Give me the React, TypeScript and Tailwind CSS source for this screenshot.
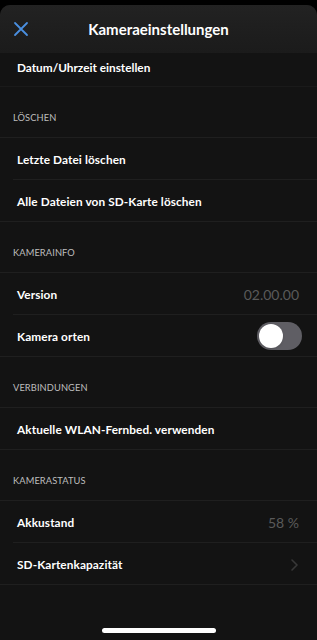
import React from "react";

type Row = {
  label: string;
  value?: string;
  toggle?: boolean;
  chevron?: boolean;
};

type Section = { title: string; rows: Row[] };

const sections: Section[] = [
  { title: "Löschen", rows: [{ label: "Letzte Datei löschen" }, { label: "Alle Dateien von SD-Karte löschen" }] },
  { title: "Kamerainfo", rows: [{ label: "Version", value: "02.00.00" }, { label: "Kamera orten", toggle: true }] },
  { title: "Verbindungen", rows: [{ label: "Aktuelle WLAN-Fernbed. verwenden" }] },
  { title: "Kamerastatus", rows: [{ label: "Akkustand", value: "58 %" }, { label: "SD-Kartenkapazität", chevron: true }] },
];

function Toggle() {
  return (
    <div className="w-[45px] h-[28px] rounded-full bg-[#5f5e64] p-[2px] flex items-center -mr-[3px] -mt-[2px]">
      <div className="w-[24px] h-[24px] rounded-full bg-white shadow" />
    </div>
  );
}

function ListRow({ row, last }: { row: Row; last: boolean }) {
  return (
    <div className={last ? "" : "pl-[13px]"}>
      <div className={`h-[42px] flex items-center pt-[2px] pr-[18px] border-b border-[#1f1f1f] ${last ? "pl-[17px]" : "pl-[4px]"}`}>
        <span className="flex-1 text-white text-[11.8px] font-bold tracking-[0.1px]">{row.label}</span>
        {row.value && <span className="text-[#5a5a5a] text-[14px]">{row.value}</span>}
        {row.toggle && <Toggle />}
        {row.chevron && (
          <svg width="7" height="12" viewBox="0 0 7 12" className="mr-[1px]">
            <path d="M1 1l5 5-5 5" fill="none" stroke="#383838" strokeWidth="1.6" strokeLinecap="round" strokeLinejoin="round" />
          </svg>
        )}
      </div>
    </div>
  );
}

export default function App() {
  return (
    <div className="w-[317px] h-[640px] bg-black pt-[5px] overflow-hidden" style={{ fontFamily: "Lato, 'Open Sans', sans-serif" }}>
      <div className="h-[635px] rounded-t-[10px] bg-[#131313] overflow-hidden flex flex-col">
        <div className="h-[48px] shrink-0 bg-gradient-to-b from-[#222222] to-[#1b1b1b] flex items-center relative">
          <svg width="16" height="16" viewBox="0 0 16 16" className="ml-[13px]">
            <path d="M2 2l12 12M14 2L2 14" stroke="#4a8fe0" strokeWidth="1.8" strokeLinecap="round" />
          </svg>
          <span className="absolute left-0 right-0 text-center text-white text-[15px] font-bold pointer-events-none">Kameraeinstellungen</span>
        </div>
        <div className="flex-1 flex flex-col">
          <div className="h-[34px] flex items-center pl-[17px] pb-[4px] border-b border-[#1a1a1a]">
            <span className="text-white text-[11.8px] font-bold">Datum/Uhrzeit einstellen</span>
          </div>
          {sections.map((s) => (
            <div key={s.title}>
              <div className="h-[51px] flex items-center pl-[13px] pt-[11px] border-b border-[#1f1f1f]">
                <span className="text-[#bdbdbd] text-[9.3px] uppercase tracking-[0.1px]">{s.title}</span>
              </div>
              {s.rows.map((r, i) => (
                <ListRow key={r.label} row={r} last={i === s.rows.length - 1} />
              ))}
            </div>
          ))}
          <div className="flex-1" />
          <div className="h-[15px] flex items-end justify-center pb-[7px]">
            <div className="w-[114px] h-[5px] rounded-full bg-white" />
          </div>
        </div>
      </div>
    </div>
  );
}
